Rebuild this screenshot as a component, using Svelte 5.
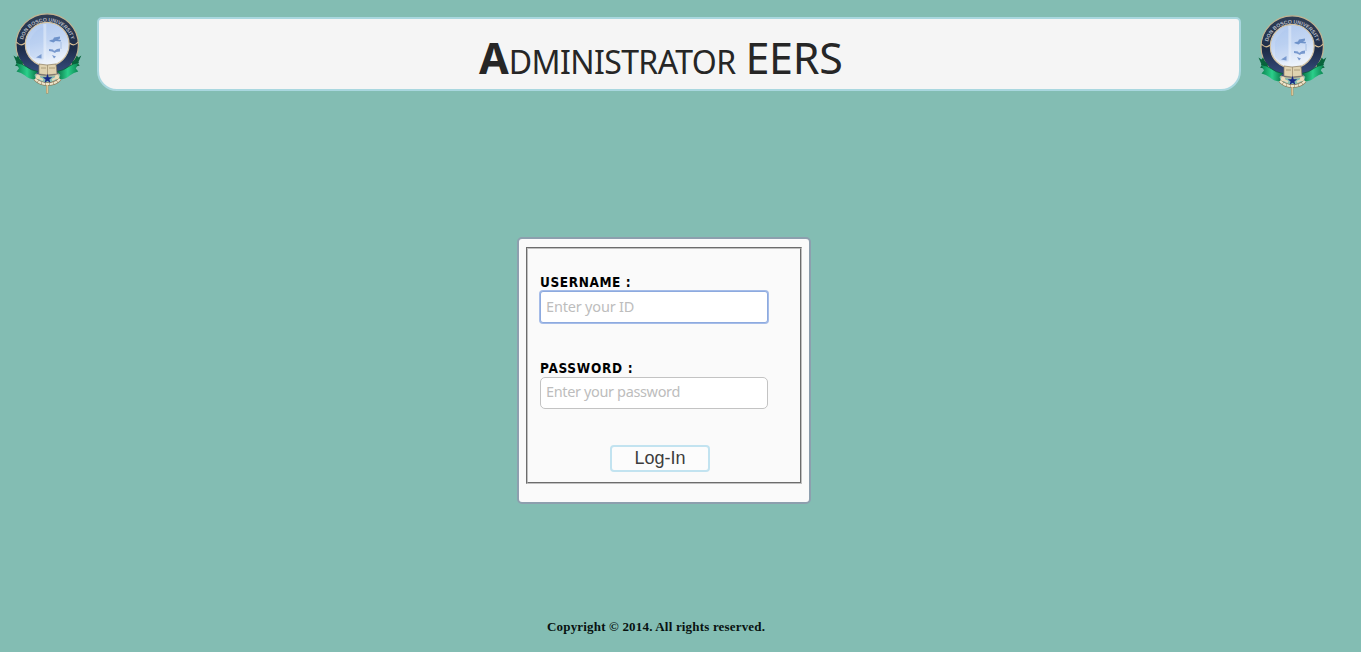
<script>
  let username = $state('');
  let password = $state('');
</script>

{#snippet crest(id)}
  <svg class="crest" viewBox="12 12 72 84" role="img" aria-label="Don Bosco University">
    <defs>
      <linearGradient id="sky-{id}" x1="0" y1="0" x2="0.25" y2="1">
        <stop offset="0" stop-color="#b0c8ee" />
        <stop offset="0.5" stop-color="#c3d6f3" />
        <stop offset="1" stop-color="#edf3fb" />
      </linearGradient>
      <linearGradient id="ring-{id}" x1="0" y1="0" x2="0" y2="1">
        <stop offset="0" stop-color="#303e55" />
        <stop offset="0.55" stop-color="#1d2c48" />
        <stop offset="1" stop-color="#3a5286" />
      </linearGradient>
      <linearGradient id="green-{id}">
        <stop offset="0" stop-color="#0a8450" />
        <stop offset="0.5" stop-color="#2bcf8a" />
        <stop offset="1" stop-color="#087044" />
      </linearGradient>
      <path id="arc-{id}" d="M23.8 56 A25.2 25.2 0 1 1 70.6 56" />
      <g id="ribbon-{id}">
        <path d="M13.500 55.500l3 2 1.500-2q1.500 4 5 7l-1 5-7-2 2-2z" fill="#08643c" />
        <path d="M16 62.500q6 1 10 4 5 4 12 5l-3.500 3.500 1.500 4.500q-7 0-11-4-4-3-8.500-4l2.500-3z" fill="url(#green-{id})" />
        <path d="M16 62.500q6 1 10 4 5 4 12 5" fill="none" stroke="#075a37" stroke-width=".8" />
      </g>
    </defs>
    <circle cx="47.2" cy="45" r="31.2" fill="url(#ring-{id})" stroke="#c3b492" stroke-width="1.2" />
    <circle cx="47.2" cy="44.3" r="21.9" fill="url(#sky-{id})" stroke="#d5c5a5" stroke-width="1.2" />
    <path d="M30 40q5-11 14-13v32q-9 2-14-4z" fill="#a5c1ec" opacity=".28" />
    <path d="M44.800 24v40" stroke="#edf4fc" stroke-width="3" opacity=".45" />
    <path d="M49 41q1-1.500 4-1.500l1-2 6-1v2l-2 1 3 .5-.5 1.500-5-.5-2 1.500z" fill="#6f93ca" />
    <path d="M49 49l4 .5 1 1.500 3-2 3-.5v3l-4 .5-1 1-3-1.500-3-.5zM36 57.500l5.500-3.500v4.500zM52 55l4 1.500-2 2z" fill="#7899ce" />
    <path d="M61 42v7" fill="none" stroke="#9cb6df" stroke-width=".8" />
    <path d="M16.500 42q4 5 8.500 1M69.500 43q5 4 8.500-1" fill="none" stroke="#d7bd93" stroke-width="1.2" />
    <text class="motto"><textPath href="#arc-{id}" startOffset="50%" text-anchor="middle" textLength="65">DON BOSCO UNIVERSITY</textPath></text>
    <use href="#ribbon-{id}" />
    <use href="#ribbon-{id}" transform="translate(94.800 0) scale(-1 1)" />
    <path d="M39 64l8 1 9-1 1 10-10 1-8-1z" fill="#dfd2b0" stroke="#8d7c60" stroke-width=".7" />
    <path d="M47.500 65v10M41 68h5M49 68h6" stroke="#a08f70" stroke-width=".8" />
    <path d="M35 79q5 5 12.500 5 8 0 12.500-5" fill="none" stroke="#8c7857" stroke-width="3.400" />
    <path d="M35 79q5 5 12.500 5 8 0 12.500-5" fill="none" stroke="#efe6cb" stroke-width="2.200" stroke-dasharray="3.500 .5" />
    <path d="M38 77.500l5 2.500M57 77.500l-5 2.500" stroke="#e6d9b8" stroke-width="2" />
    <circle cx="38" cy="77" r="2.200" fill="#eadbb9" /><circle cx="57" cy="77" r="2.200" fill="#eadbb9" />
    <path d="M47.200 85v8.500" stroke="#ad8b56" stroke-width="2.200" />
    <path d="M47.200 85v8" stroke="#efdfb6" stroke-width="1" />
    <path d="M47.500 73.800l1.200 3.400h3.600l-2.900 2.200 1.100 3.500-3-2.100-3 2.100 1.100-3.500-2.900-2.200h3.600z" fill="#172a87" />
  </svg>
{/snippet}

<div class="page">
  <header>
    <div class="logo">{@render crest('left')}</div>
    <h1><b>A</b><span class="small">DMINISTRATOR</span><span class="acronym">EERS</span></h1>
    <div class="logo right">{@render crest('right')}</div>
  </header>
  <main>
    <form onsubmit={(e) => e.preventDefault()}>
      <fieldset>
        <label for="user">USERNAME :</label>
        <input id="user" class="active" placeholder="Enter your ID" bind:value={username} />
        <label class="second" for="pass">PASSWORD :</label>
        <input id="pass" type="password" placeholder="Enter your password" bind:value={password} />
        <button type="submit">Log-In</button>
      </fieldset>
    </form>
  </main>
  <footer>Copyright © 2014. All rights reserved.</footer>
</div>

<style>
  :global(body) { background: #83bdb3; }
  .page {
    box-sizing: border-box;
    height: 652px;
    display: flex;
    flex-direction: column;
    background: #83bdb3;
    overflow: hidden;
  }
  header {
    display: grid;
    grid-template-columns: 97px 1144px 88px;
    height: 100px;
    align-items: start;
  }
  .logo { padding: 12px 0 0 12px; }
  .logo.right { padding: 14px 0 0 16px; }
  .crest { display: block; width: 72px; height: 84px; }
  .motto { font: bold 5.2px "Liberation Sans", sans-serif; fill: #b5bcc6; }
  h1 {
    box-sizing: border-box;
    margin: 17px 0 0;
    height: 74px;
    display: flex;
    align-items: baseline;
    padding: 9px 0 0 380px;
    border: 2px solid #a9d7df;
    border-radius: 5px 5px 20px 20px;
    background: #f5f5f5;
    color: #262626;
    font: 400 43px/60px "Noto Sans", sans-serif;
    white-space: nowrap;
  }
  h1 b { font-weight: 700; }
  .small { font-size: 32px; letter-spacing: -0.6px; }
  .acronym { margin-left: 10px; letter-spacing: -0.3px; }
  main { padding: 137px 0 0 517px; }
  form {
    box-sizing: border-box;
    width: 294px;
    height: 267px;
    padding: 8px 7px;
    border: 2px solid #8d9fae;
    border-radius: 5px;
    background: #fafafa;
  }
  fieldset {
    box-sizing: border-box;
    display: flex;
    flex-direction: column;
    width: 276px;
    height: 237px;
    margin: 0;
    padding: 24px 0 0 12px;
    border: 2px groove #c0c0c0;
  }
  label {
    height: 18px;
    color: #000;
    font: bold 13.5px/18px "DejaVu Sans Condensed", "DejaVu Sans", sans-serif;
    font-stretch: condensed;
    letter-spacing: 0.6px;
  }
  .second { margin-top: 36px; letter-spacing: 0.72px; }
  input {
    box-sizing: border-box;
    width: 228px;
    height: 32px;
    margin: 0;
    padding: 0 5px 4px;
    border: 1px solid #c3c3c3;
    border-radius: 5px;
    outline: none;
    background: #fff;
    color: #555;
    font: 14.5px/20px "Noto Sans", sans-serif;
    letter-spacing: -0.36px;
  }
  input.active { padding-bottom: 2px; border-color: #8daadf; box-shadow: 0 0 0 1px #a5bce8; border-radius: 3px; letter-spacing: -0.18px; }
  input::placeholder { color: #bdbdbd; opacity: 1; }
  button {
    box-sizing: border-box;
    width: 100px;
    height: 27px;
    margin: 36px 0 0 70px;
    padding: 0 0 1px;
    border: 2px solid #c2e3f0;
    border-radius: 4px;
    background: #fcfcfc;
    color: #3d3d3d;
    font: 18px/22px "Liberation Sans", sans-serif;
  }
  footer {
    margin-top: 115px;
    padding-left: 547px;
    font: bold 13px/15px "Liberation Serif", serif;
    letter-spacing: 0.18px;
    color: #081210;
  }
</style>
